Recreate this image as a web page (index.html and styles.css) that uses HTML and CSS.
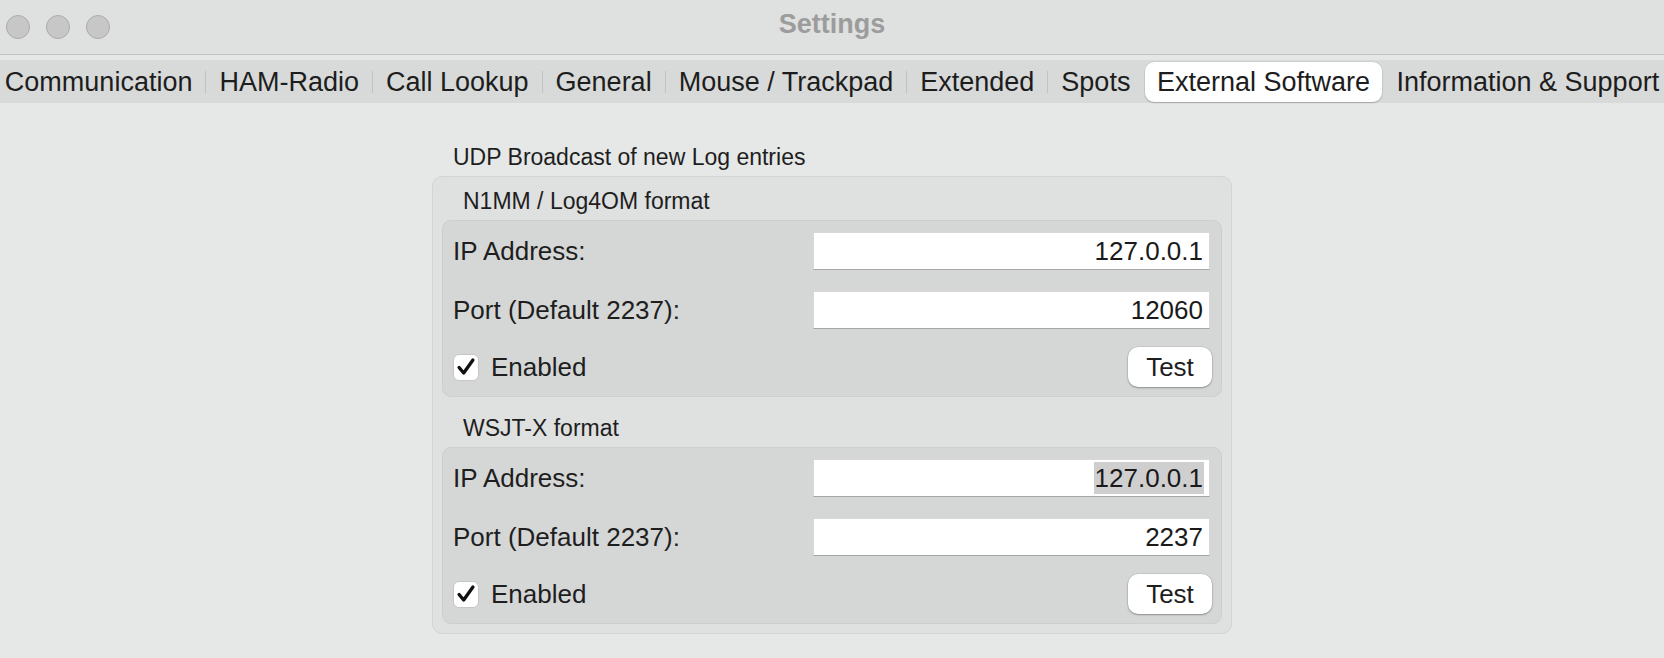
FILE: index.html
```html
<!DOCTYPE html>
<html lang="en">
<head>
<meta charset="utf-8">
<title>Settings</title>
<link rel="stylesheet" href="styles.css">
</head>
<body>
<div class="window">
  <header class="titlebar">
    <div class="lights"><span class="light"></span><span class="light"></span><span class="light"></span></div>
    <div class="title">Settings</div>
    <div class="spacer"></div>
  </header>
  <div class="band"></div>
  <nav class="tabs">
    <span class="tab">Communication</span><span class="sep"></span>
    <span class="tab">HAM-Radio</span><span class="sep"></span>
    <span class="tab">Call Lookup</span><span class="sep"></span>
    <span class="tab">General</span><span class="sep"></span>
    <span class="tab">Mouse / Trackpad</span><span class="sep"></span>
    <span class="tab">Extended</span><span class="sep"></span>
    <span class="tab">Spots</span><span class="sep hidden"></span>
    <span class="tab active">External Software</span><span class="sep hidden"></span>
    <span class="tab">Information &amp; Support</span>
  </nav>
  <main class="content">
    <section class="group">
      <div class="group-title">UDP Broadcast of new Log entries</div>
      <div class="group-box">
        <div class="sub">
          <div class="sub-title">N1MM / Log4OM format</div>
          <div class="sub-box">
            <div class="row field-row"><span class="label">IP Address:</span><div class="field">127.0.0.1</div></div>
            <div class="row field-row"><span class="label">Port (Default 2237):</span><div class="field">12060</div></div>
            <div class="row check-row">
              <div class="check"><span class="box"><svg viewBox="0 0 26 26" width="24" height="24"><path d="M5.5 13.5 L10.5 19.5 L20.5 5.5" fill="none" stroke="#111" stroke-width="3.6" stroke-linecap="round" stroke-linejoin="round"/></svg></span><span class="label">Enabled</span></div>
              <button class="btn">Test</button>
            </div>
          </div>
        </div>
        <div class="sub">
          <div class="sub-title">WSJT-X format</div>
          <div class="sub-box">
            <div class="row field-row"><span class="label">IP Address:</span><div class="field"><span class="selected">127.0.0.1</span></div></div>
            <div class="row field-row"><span class="label">Port (Default 2237):</span><div class="field">2237</div></div>
            <div class="row check-row">
              <div class="check"><span class="box"><svg viewBox="0 0 26 26" width="24" height="24"><path d="M5.5 13.5 L10.5 19.5 L20.5 5.5" fill="none" stroke="#111" stroke-width="3.6" stroke-linecap="round" stroke-linejoin="round"/></svg></span><span class="label">Enabled</span></div>
              <button class="btn">Test</button>
            </div>
          </div>
        </div>
      </div>
    </section>
  </main>
</div>
</body>
</html>
```
FILE: styles.css
```css
html, body {
  margin: 0;
  padding: 0;
}
body {
  width: 1664px;
  height: 658px;
  overflow: hidden;
  background: #e6e7e7;
  font-family: "Liberation Sans", Arial, sans-serif;
  color: #1e1e1e;
}
.titlebar {
  height: 54px;
  display: grid;
  grid-template-columns: 1fr auto 1fr;
  align-items: center;
  background: #dfe0e0;
  border-bottom: 1px solid #c3c3c3;
}
.lights {
  display: flex;
  gap: 16px;
  padding-left: 6px;
}
.light {
  width: 24px;
  height: 24px;
  box-sizing: border-box;
  border-radius: 50%;
  background: #c7c7c7;
  border: 1px solid #acacac;
}
.title {
  font-weight: bold;
  font-size: 27px;
  line-height: 30px;
  color: #9c9c9c;
  padding-bottom: 6px;
}
.band {
  height: 5px;
  background: #e5e6e6;
}
.tabs {
  height: 43px;
  display: flex;
  justify-content: center;
  align-items: center;
  background: #d8d9d9;
  white-space: nowrap;
}
.tab {
  flex: none;
  font-size: 27px;
  line-height: 40px;
  padding: 0 13px;
  color: #1d1d1d;
}
.tab.active {
  height: 40px;
  padding: 0 11.5px;
  margin: 0 1px;
  background: #ffffff;
  border-radius: 9px;
  box-shadow: 0 1px 1.5px rgba(0, 0, 0, 0.22), 0 0 0 0.5px rgba(0, 0, 0, 0.08);
}
.sep {
  flex: none;
  width: 1px;
  height: 22px;
  background: #c1c2c2;
}
.sep.hidden {
  visibility: hidden;
}
.content {
  padding-top: 40px;
  display: flex;
  justify-content: center;
}
.group {
  width: 800px;
}
.group-title {
  font-size: 23px;
  line-height: 28px;
  padding-left: 21px;
  margin-bottom: 5px;
}
.group-box {
  background: #dfe0e0;
  border: 1px solid #d3d4d4;
  border-radius: 10px;
  padding: 0 9px 9px;
  display: flex;
  flex-direction: column;
  gap: 7px;
}
.sub-title {
  font-size: 23px;
  line-height: 24px;
  padding: 12px 0 7px 21px;
}
.sub-box {
  background: #d5d6d6;
  border: 1px solid #cdcece;
  border-radius: 9px;
  padding: 11px 9px 9px 10px;
  display: flex;
  flex-direction: column;
}
.row {
  display: flex;
  align-items: center;
  justify-content: space-between;
}
.field-row {
  height: 38px;
}
.field-row + .field-row {
  margin-top: 21px;
}
.check-row {
  height: 40px;
  margin-top: 18px;
}
.label {
  font-size: 26px;
}
.field {
  width: 397px;
  height: 38px;
  box-sizing: border-box;
  margin-right: 2px;
  background: #ffffff;
  border: 1px solid #d8d8d8;
  border-bottom-color: #a6a6a6;
  text-align: right;
  font-size: 26px;
  line-height: 36px;
  padding-right: 6px;
  color: #1a1a1a;
}
.selected {
  display: inline-block;
  line-height: 32px;
  background: #cfcfcf;
  padding: 0 1px;
  margin-right: -1px;
}
.check {
  display: flex;
  align-items: center;
  gap: 12px;
}
.box {
  width: 26px;
  height: 27px;
  box-sizing: border-box;
  background: #ffffff;
  border: 1px solid #c6c6c6;
  border-radius: 6px;
  display: flex;
  align-items: center;
  justify-content: center;
}
.box svg {
  display: block;
}
.btn {
  width: 84px;
  height: 40px;
  padding: 0;
  border: none;
  border-radius: 10px;
  background: #ffffff;
  font-family: inherit;
  font-size: 26px;
  line-height: 40px;
  color: #1e1e1e;
  text-align: center;
  box-shadow: 0 0 0 0.5px rgba(0, 0, 0, 0.12), 0 1px 2px rgba(0, 0, 0, 0.3);
}
```
